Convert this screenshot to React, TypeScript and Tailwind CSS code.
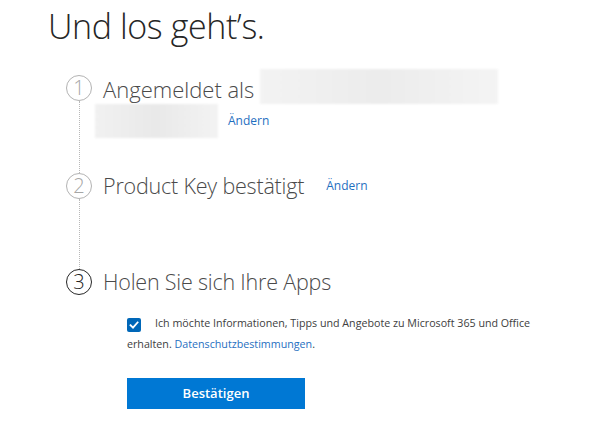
import React, { useState } from "react";

type StepProps = {
  n: number;
  active?: boolean;
  line?: boolean;
  children: React.ReactNode;
  className?: string;
};

function Step({ n, active, line, children, className }: StepProps) {
  return (
    <div className={"flex " + (className ?? "")}>
      <div className="flex w-[26px] shrink-0 flex-col items-center">
        <div
          className={
            "flex h-[26px] w-[26px] items-center justify-center rounded-full border text-[20px] font-light leading-none " +
            (active ? "border-[#262626] text-[#262626]" : "border-[#b3b3b3] text-[#a6a6a6]")
          }
        >
          {n}
        </div>
        {line && <div className="w-0 flex-1 border-l border-dotted border-[#b8b8b8]" />}
      </div>
      <div className="ml-[11px] flex-1">{children}</div>
    </div>
  );
}

export default function App() {
  const [checked, setChecked] = useState(true);

  return (
    <div className="h-[447px] w-[603px] overflow-hidden bg-white font-['Open_Sans',sans-serif] text-[#333]">
      <div className="pl-[48px] pt-[2px]">
        <h1 className="text-[34px] font-light leading-[48px] tracking-[-0.4px] text-[#262626]">Und los geht’s.</h1>
      </div>

      <div className="ml-[66px] mt-[25px]">
        <Step n={1} line className="h-[98px]">
          <div className="-mt-[2px] flex items-center">
            <span className="text-[22px] font-light leading-[26px] text-[#4a4a4a]">Angemeldet als</span>
            <div className="ml-[6px] -mt-[4px] h-[35px] w-[238px] bg-gradient-to-r from-[#f3f3f3] via-[#ececec] to-[#f4f4f4] blur-[1px]" />
          </div>
          <div className="-ml-[8px] flex items-center">
            <div className="h-[34px] w-[123px] bg-gradient-to-r from-[#f1f1f1] via-[#e9e9e9] to-[#f3f3f3] blur-[1px]" />
            <a className="ml-[10px] text-[12px] text-[#1f6fbf]" href="#">Ändern</a>
          </div>
        </Step>

        <Step n={2} line className="h-[96px]">
          <div className="flex items-center">
            <span className="text-[21.5px] font-light leading-[26px] tracking-[-0.2px] text-[#4a4a4a]">Product Key bestätigt</span>
            <a className="ml-[22px] text-[12px] text-[#1f6fbf]" href="#">Ändern</a>
          </div>
        </Step>

        <Step n={3} active>
          <span className="text-[21.5px] font-light leading-[26px] tracking-[-0.2px] text-[#4a4a4a]">Holen Sie sich Ihre Apps</span>
        </Step>
      </div>

      <div className="ml-[127px] mt-[17px] w-[420px] text-[10.7px] leading-[21px] text-[#404040]">
        <span
          onClick={() => setChecked(!checked)}
          className={
            "mr-[14px] inline-flex h-[14px] w-[14px] translate-y-[3px] cursor-pointer items-center justify-center rounded-[2px] align-baseline " +
            (checked ? "bg-[#0067b8]" : "border border-[#666] bg-white")
          }
        >
          {checked && (
            <svg width="10" height="10" viewBox="0 0 10 10" fill="none">
              <path d="M1.5 5.2 L4 7.6 L8.6 2.4" stroke="white" strokeWidth="1.8" strokeLinecap="square" />
            </svg>
          )}
        </span>
        Ich möchte Informationen, Tipps und Angebote zu Microsoft 365 und Office erhalten.{" "}
        <a className="text-[#1f6fbf]" href="#">Datenschutzbestimmungen</a>.
      </div>

      <div className="ml-[127px] mt-[23px]">
        <button className="h-[31px] w-[178px] bg-[#0078d4] text-[13px] font-semibold text-white">
          Bestätigen
        </button>
      </div>
    </div>
  );
}
